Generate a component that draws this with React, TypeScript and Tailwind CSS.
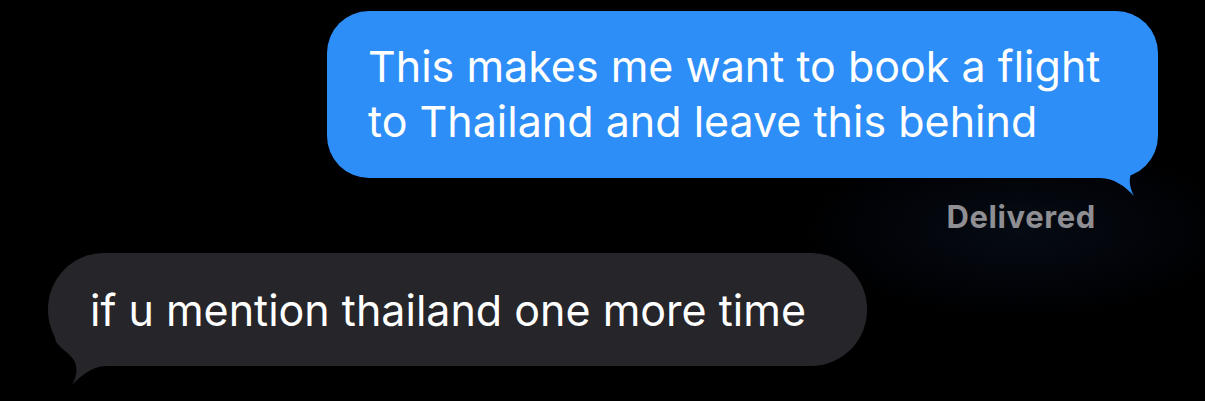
import React from 'react';

const BlueTail = () => (
  <svg className="absolute right-0 bottom-0 translate-y-[18px]" width="80" height="78" viewBox="0 0 80 78">
    <path
      d="M0 60 L22 60 C36 60 48 69 56 78 C53 72 50 64 53 56 C57 48 66 44 72 36 L80 0 L0 0 Z"
      fill="#2d8ef7"
    />
  </svg>
);

const GrayTail = () => (
  <svg className="absolute left-0 bottom-0 translate-y-[19px]" width="80" height="79" viewBox="0 0 80 79">
    <path
      d="M80 60 L58 60 C44 60 33 70 24 79 C28 72 30 64 27 56 C23 48 14 44 8 36 L0 0 L80 0 Z"
      fill="#262529"
    />
  </svg>
);

export default function App() {
  return (
    <div className="relative h-[401px] w-[1205px] overflow-hidden bg-black bg-[radial-gradient(ellipse_220px_90px_at_1020px_230px,#060b14_0%,#020409_60%,#000_100%)] font-[Inter,'Liberation_Sans',sans-serif]">
      <div className="flex flex-col pt-[11px]">
        {/* outgoing */}
        <div className="relative ml-auto mr-[47px] h-[167px] w-[831px]">
          <BlueTail />
          <div className="relative h-full w-full rounded-[42px] bg-[#2d8ef7] pl-[41px] pt-[28px] text-[43px] leading-[55px] text-white">
            This makes me want to book a flight
            <br />
            to Thailand and leave this behind
          </div>
        </div>

        <div className="mr-[109px] mt-[20px] text-right text-[31px] font-bold leading-[37px] tracking-[0.6px] text-[#8e8e93]">
          Delivered
        </div>

        {/* incoming */}
        <div className="relative ml-[48px] mt-[18px] h-[113px] w-[819px]">
          <GrayTail />
          <div className="relative h-full w-full rounded-[56px] bg-[#262529] pl-[42px] pt-[30px] text-[43px] leading-[55px] text-white">
            if u mention thailand one more time
          </div>
        </div>
      </div>
    </div>
  );
}
